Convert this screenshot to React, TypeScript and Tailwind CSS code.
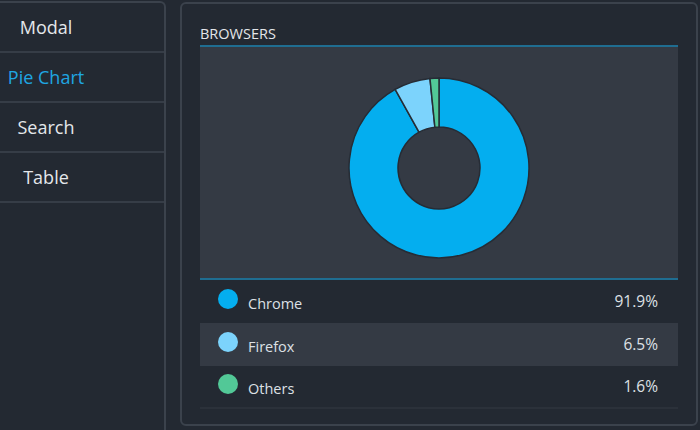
// 대시보드 데모 — 사이드바 메뉴 + 브라우저 점유율 도넛 차트

const NAV_ITEMS = ["Modal", "Pie Chart", "Search", "Table"];
const ACTIVE = "Pie Chart";

const BROWSERS = [
  { name: "Chrome", value: 91.9, color: "#04aeef" },
  { name: "Firefox", value: 6.5, color: "#7cd3fc" },
  { name: "Others", value: 1.6, color: "#52c897" },
];

function arcPath(cx: number, cy: number, r: number, ir: number, a0: number, a1: number) {
  const p = (rad: number, a: number) => {
    const t = ((a - 90) * Math.PI) / 180;
    return `${(cx + rad * Math.cos(t)).toFixed(2)} ${(cy + rad * Math.sin(t)).toFixed(2)}`;
  };
  const large = a1 - a0 > 180 ? 1 : 0;
  return `M ${p(r, a0)} A ${r} ${r} 0 ${large} 1 ${p(r, a1)} L ${p(ir, a1)} A ${ir} ${ir} 0 ${large} 0 ${p(ir, a0)} Z`;
}

function Donut() {
  const total = BROWSERS.reduce((s, b) => s + b.value, 0);
  let start = 0;
  return (
    <svg width="184" height="184" viewBox="0 0 184 184">
      {BROWSERS.map((b) => {
        const end = start + (b.value / total) * 360;
        const d = arcPath(92, 92, 90, 41, start, end);
        start = end;
        return <path key={b.name} d={d} fill={b.color} stroke="#262c35" strokeWidth={1.5} />;
      })}
    </svg>
  );
}

function Sidebar() {
  return (
    <nav className="mt-[1px] w-[166px] shrink-0 rounded-tr-[6px] border-t-[2px] border-r-[2px] border-[#3b424c]">
      {NAV_ITEMS.map((item) => (
        <div key={item} className="flex h-[50px] items-center border-b-[2px] border-[#363d47]">
          <span
            className={`w-[92px] text-center text-[18px] ${
              item === ACTIVE ? "text-[#1fa6e2]" : "text-[#e4e7eb]"
            }`}
          >
            {item}
          </span>
        </div>
      ))}
    </nav>
  );
}

export default function App() {
  return (
    <main
      className="flex h-[430px] w-[700px] gap-[14px] overflow-hidden bg-[#232932]"
      style={{ fontFamily: '"Open Sans", "Noto Sans", sans-serif' }}
    >
      <Sidebar />
      <section className="mt-[2px] mb-[4px] mr-[2px] flex flex-1 flex-col rounded-[6px] border-[2px] border-[#3b424c] px-[18px] pr-[18px]">
        <h2 className="mt-[19px] h-[22px] text-[14.5px] leading-[22px] text-[#e3e6ea]">
          BROWSERS
        </h2>
        <div className="flex h-[235px] justify-center border-y-[2px] border-[#1f6d91] bg-[#343a44] pt-[29px]">
          <Donut />
        </div>
        <ul className="text-[14.5px] text-[#dde0e5]">
          {BROWSERS.map((b, i) => (
            <li
              key={b.name}
              className={`flex h-[43px] items-center pl-[18px] pr-[20px] ${
                i === 1 ? "bg-[#343a44]" : ""
              } ${i === 2 ? "border-b-[2px] border-[#2b313a]" : ""}`}
            >
              <span
                className="mb-[6px] size-[20px] shrink-0 rounded-full"
                style={{ backgroundColor: b.color }}
              />
              <span className="ml-[10px] mt-[4px] flex-1">{b.name}</span>
              <span className="text-[15.5px] tabular-nums">{b.value}%</span>
            </li>
          ))}
        </ul>
      </section>
    </main>
  );
}
